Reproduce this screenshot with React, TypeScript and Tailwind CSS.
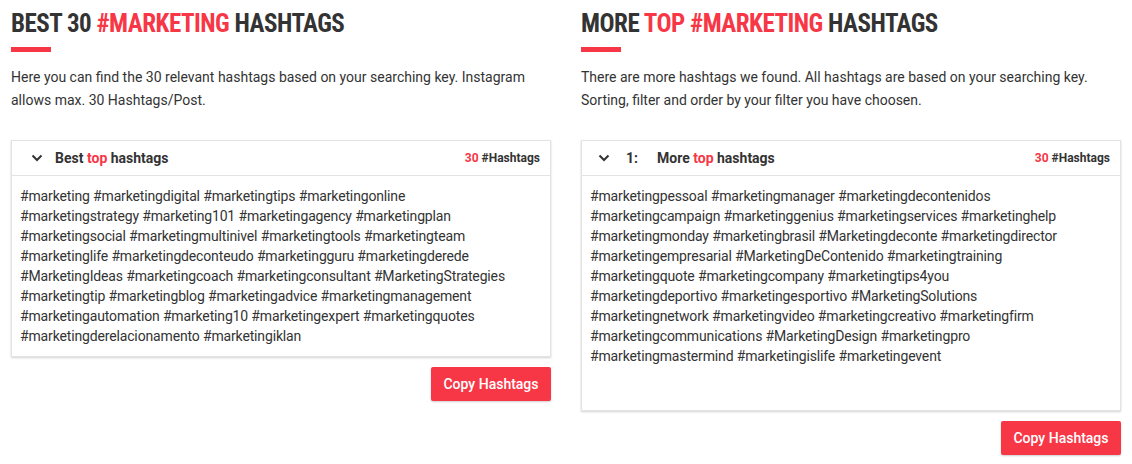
import React from 'react';

const best = [
    '#marketing #marketingdigital #marketingtips #marketingonline',
    '#marketingstrategy #marketing101 #marketingagency #marketingplan',
    '#marketingsocial #marketingmultinivel #marketingtools #marketingteam',
    '#marketinglife #marketingdeconteudo #marketingguru #marketingderede',
    '#MarketingIdeas #marketingcoach #marketingconsultant #MarketingStrategies',
    '#marketingtip #marketingblog #marketingadvice #marketingmanagement',
    '#marketingautomation #marketing10 #marketingexpert #marketingquotes',
    '#marketingderelacionamento #marketingiklan',
];

const more = [
    '#marketingpessoal #marketingmanager #marketingdecontenidos',
    '#marketingcampaign #marketinggenius #marketingservices #marketinghelp',
    '#marketingmonday #marketingbrasil #Marketingdeconte #marketingdirector',
    '#marketingempresarial #MarketingDeContenido #marketingtraining',
    '#marketingquote #marketingcompany #marketingtips4you',
    '#marketingdeportivo #marketingesportivo #MarketingSolutions',
    '#marketingnetwork #marketingvideo #marketingcreativo #marketingfirm',
    '#marketingcommunications #MarketingDesign #marketingpro',
    '#marketingmastermind #marketingislife #marketingevent',
];

function Chevron() {
    return (
        <svg width="12" height="8" viewBox="0 0 12 8" className="shrink-0">
            <path d="M1.5 1.5 L6 6 L10.5 1.5" fill="none" stroke="#333" strokeWidth="2" />
        </svg>
    );
}

function Section({
    title,
    text,
    label,
    index,
    tags,
    bodyClass,
}: {
    title: React.ReactNode;
    text: string[];
    label: string;
    index?: string;
    tags: string[];
    bodyClass: string;
}) {
    return (
        <div className="flex-1 flex flex-col">
            {/* Heading */}
            <h2 className="mt-[9px] text-[25px] leading-[30px] font-bold uppercase text-[#333] tracking-[-0.5px] [font-family:'Roboto_Condensed','Roboto',sans-serif]">
                {title}
            </h2>
            <div className="mt-[8px] w-10 h-[5px] bg-[#f73646]" />
            <p className="mt-[14px] text-sm leading-[23px] text-[#333]">
                {text[0]}
                <br />
                {text[1]}
            </p>

            {/* Card */}
            <div className="mt-[28px] bg-white border border-[#e3e3e3] shadow-[0_1px_2px_rgba(0,0,0,0.18)]">
                <div
                    className={`h-[35px] flex items-center border-b border-[#e3e3e3] pr-[10px] ${
                        index ? 'pl-[16px]' : 'pl-[19px]'
                    }`}
                >
                    <Chevron />
                    {index && <span className="ml-[16px] text-sm font-bold text-[#333]">{index}</span>}
                    <span className={`${index ? 'ml-[19px]' : 'ml-[12px]'} text-sm font-bold text-[#333]`}>
                        {label} <span className="text-[#f73646]">top</span> hashtags
                    </span>
                    <span className="ml-auto text-xs font-bold text-[#333]">
                        <span className="text-[#f73646]">30</span> #Hashtags
                    </span>
                </div>
                <div className={`px-[8px] pt-[10px] text-sm leading-5 tracking-[-0.15px] text-[#333] ${bodyClass}`}>
                    {tags.map((t) => (
                        <div key={t}>{t}</div>
                    ))}
                </div>
            </div>

            <div className="flex justify-end mt-[10px]">
                <button className="w-[120px] h-[34px] rounded-[2px] bg-[#f73646] text-white text-sm font-medium shadow-[0_1px_2px_rgba(0,0,0,0.2)]">
                    Copy Hashtags
                </button>
            </div>
        </div>
    );
}

export default function App() {
    return (
        <div className="w-[1132px] h-[464px] bg-white px-[11px] flex gap-[30px] [font-family:'Roboto',sans-serif]">
            <Section
                title={
                    <>
                        Best 30 <span className="text-[#f73646]">#Marketing</span> Hashtags
                    </>
                }
                text={[
                    'Here you can find the 30 relevant hashtags based on your searching key. Instagram',
                    'allows max. 30 Hashtags/Post.',
                ]}
                label="Best"
                tags={best}
                bodyClass="h-[180px]"
            />
            <Section
                title={
                    <>
                        More <span className="text-[#f73646]">top #Marketing</span> Hashtags
                    </>
                }
                text={[
                    'There are more hashtags we found. All hashtags are based on your searching key.',
                    'Sorting, filter and order by your filter you have choosen.',
                ]}
                label="More"
                index="1:"
                tags={more}
                bodyClass="h-[234px]"
            />
        </div>
    );
}
